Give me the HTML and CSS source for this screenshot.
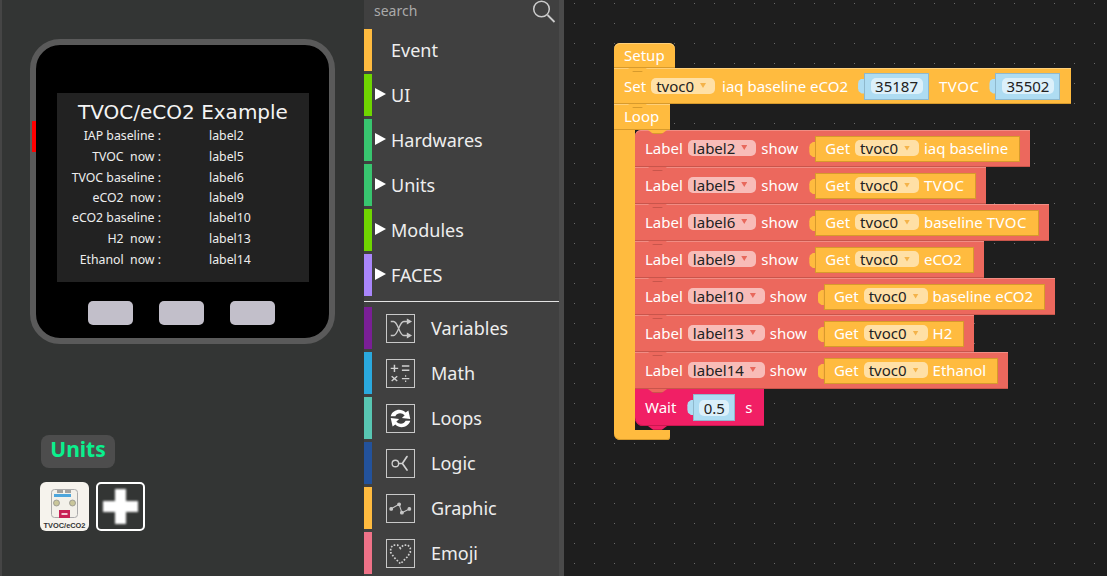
FILE: index.html
```html
<!DOCTYPE html>
<html lang="en">
<head>
    <meta charset="UTF-8">
    <meta name="viewport" content="width=device-width, initial-scale=1.0">
    <title>UIFlow TVOC/eCO2 Example</title>
    <link rel="stylesheet" href="styles.css">
</head>
<body>
    <section class="preview">
        <div class="device">
            <span class="power"></span>
            <div class="screen">
                <h1 class="screen-title">TVOC/eCO2 Example</h1>
                <div class="screen-rows">
                    <span class="key">IAP baseline :</span><span class="val">label2</span>
                    <span class="key">TVOC&nbsp; now :</span><span class="val">label5</span>
                    <span class="key">TVOC baseline :</span><span class="val">label6</span>
                    <span class="key">eCO2&nbsp; now :</span><span class="val">label9</span>
                    <span class="key">eCO2 baseline :</span><span class="val">label10</span>
                    <span class="key">H2&nbsp; now :</span><span class="val">label13</span>
                    <span class="key">Ethanol&nbsp; now :</span><span class="val">label14</span>
                </div>
            </div>
            <div class="device-btns">
                <span class="device-btn"></span>
                <span class="device-btn"></span>
                <span class="device-btn"></span>
            </div>
        </div>
        <div class="units-badge">Units</div>
        <div class="unit-tiles">
            <div class="unit-tile">
                <svg width="49" height="49" viewBox="0 0 49 49">
                    <rect x="11.500" y="7.500" width="26" height="28" rx="3" fill="#f3f1ea" stroke="#aaa"/>
                    <path d="M18 8v3M20 8v3M22 8v3M26 8v3M28 8v3M30 8v3" stroke="#555"/>
                    <rect x="14" y="12" width="17" height="3" fill="#4ea6dc"/>
                    <circle cx="16.500" cy="21" r="3" fill="#c9c69a" stroke="#888" stroke-width=".7"/>
                    <circle cx="32.500" cy="21" r="3" fill="#c9c69a" stroke="#888" stroke-width=".7"/>
                    <path d="M19 28h11v8h-11z" fill="#c81f55"/>
                    <path d="M21.500 31h6v2h-6z" fill="#f3c7d3"/>
                    <text class="tile-text" x="24.500" y="45.500" text-anchor="middle">TVOC/eCO2</text>
                </svg>
            </div>
            <div class="unit-add"><span class="plus"></span></div>
        </div>
    </section>

    <nav class="toolbox">
        <div class="search">
            <span class="search-text">search</span>
            <svg class="search-icon" width="24" height="24" viewBox="0 0 24 24" fill="none" stroke="#ccc">
                <circle cx="9.500" cy="9" r="7.800" stroke-width="1.500"/>
                <path d="M15.500 15l7 7" stroke-width="1.800"/>
            </svg>
        </div>
        <div class="cat"><span class="bar c-event"></span><span class="slot"></span>Event</div>
        <div class="cat"><span class="bar c-ui"></span><span class="slot"><i class="tri"></i></span>UI</div>
        <div class="cat"><span class="bar c-hw"></span><span class="slot"><i class="tri"></i></span>Hardwares</div>
        <div class="cat"><span class="bar c-hw"></span><span class="slot"><i class="tri"></i></span>Units</div>
        <div class="cat"><span class="bar c-ui"></span><span class="slot"><i class="tri"></i></span>Modules</div>
        <div class="cat"><span class="bar c-faces"></span><span class="slot"><i class="tri"></i></span>FACES</div>
        <hr class="divider">
        <div class="cat"><span class="bar c-var"></span>
            <svg class="cat-icon" viewBox="0 0 29 29" fill="none" stroke="#c8c8c8" stroke-width="1.400">
                <path d="M4 7h3c5 0 6 15 11 15h5M4 22h3c5 0 6-15 11-15h5"/>
                <path d="M22 5l3.500 2-3.500 2zM22 20l3.500 2-3.500 2z" fill="#c8c8c8"/>
            </svg>Variables</div>
        <div class="cat"><span class="bar c-math"></span>
            <svg class="cat-icon" viewBox="0 0 29 29" fill="none" stroke="#d0d0d0" stroke-width="1.600">
                <path d="M4 9h8M8 5v8M16 6.500h8M16 11h8M5 17.500l6 5M11 17.500l-6 5M16 20h8"/>
                <path d="M20 16.500v1.500M20 22v1.500" stroke-width="1.300"/>
            </svg>Math</div>
        <div class="cat"><span class="bar c-loops"></span>
            <svg class="cat-icon" viewBox="0 0 29 29" fill="#fff">
                <path d="M4 12c2-7 11-9 16-4l3-2 2 9-9-1 3-3c-3-3-8-3-10 1z"/>
                <path d="M25 17c-2 7-11 9-16 4l-3 2-2-9 9 1-3 3c3 3 8 3 10-1z"/>
            </svg>Loops</div>
        <div class="cat"><span class="bar c-logic"></span>
            <svg class="cat-icon" viewBox="0 0 29 29" fill="none" stroke="#d0d0d0" stroke-width="1.800">
                <circle cx="9" cy="14.500" r="3.500" stroke-width="1.400"/>
                <path d="M12.500 14.500h4l5-7.500M16.500 14.500l5 7" stroke-linecap="round"/>
            </svg>Logic</div>
        <div class="cat"><span class="bar c-event"></span>
            <svg class="cat-icon" viewBox="0 0 29 29" fill="#c8c8c8" stroke="#c8c8c8" stroke-width="1.100">
                <path d="M4 15l9-5 3 9 8-4" fill="none"/>
                <circle cx="4.500" cy="15" r="1.500"/>
                <circle cx="13" cy="10" r="1.500"/>
                <circle cx="16" cy="19" r="1.500"/>
                <circle cx="24" cy="15" r="1.500"/>
            </svg>Graphic</div>
        <div class="cat"><span class="bar c-emoji"></span>
            <svg class="cat-icon" viewBox="0 0 29 29" fill="none" stroke="#d0d0d0" stroke-width="1.800" stroke-dasharray="1.800 1.800">
                <path d="M14.500 9l-3-3.500h-5l-2.500 3v5l3.500 5 7 7 7-7 3.500-5v-5l-2.500-3h-5z"/>
            </svg>Emoji</div>
    </nav>
    <div class="toolbox-edge"></div>

    <main class="canvas">
        <div class="program">
            <div class="block yellow setup">Setup</div>
            <div class="block yellow set-row">
                Set <span class="field f-yellow">tvoc0<i class="caret"></i></span> <span class="set-text">iaq baseline eCO2</span>
                <span class="value"><span class="num">35187</span></span>
                <span class="caps">TVOC</span>
                <span class="value"><span class="num">35502</span></span>
            </div>
            <div class="loop">
                <div class="block yellow loop-head">Loop</div>
                <div class="loop-body">
                    <div class="loop-arm"></div>
                    <div class="loop-stack">
                        <div class="block red row">Label <span class="field f-red">label2<i class="caret"></i></span> show
                            <span class="getter">Get <span class="field f-yellow">tvoc0<i class="caret"></i></span> iaq baseline</span></div>
                        <div class="block red row">Label <span class="field f-red">label5<i class="caret"></i></span> show
                            <span class="getter">Get <span class="field f-yellow">tvoc0<i class="caret"></i></span> <span class="caps">TVOC</span></span></div>
                        <div class="block red row">Label <span class="field f-red">label6<i class="caret"></i></span> show
                            <span class="getter">Get <span class="field f-yellow">tvoc0<i class="caret"></i></span> baseline&nbsp;<span class="caps">TVOC</span></span></div>
                        <div class="block red row">Label <span class="field f-red">label9<i class="caret"></i></span> show
                            <span class="getter">Get <span class="field f-yellow">tvoc0<i class="caret"></i></span> eCO2</span></div>
                        <div class="block red row">Label <span class="field f-red">label10<i class="caret"></i></span> show
                            <span class="getter">Get <span class="field f-yellow">tvoc0<i class="caret"></i></span> baseline eCO2</span></div>
                        <div class="block red row">Label <span class="field f-red">label13<i class="caret"></i></span> show
                            <span class="getter">Get <span class="field f-yellow">tvoc0<i class="caret"></i></span> H2</span></div>
                        <div class="block red row">Label <span class="field f-red">label14<i class="caret"></i></span> show
                            <span class="getter">Get <span class="field f-yellow">tvoc0<i class="caret"></i></span> Ethanol</span></div>
                        <div class="block pink wait">Wait <span class="value"><span class="num">0.5</span></span> s</div>
                    </div>
                </div>
                <div class="loop-foot"></div>
            </div>
        </div>
    </main>
</body>
</html>
```

FILE: styles.css
```css
html, body { margin: 0; height: 100%; overflow: hidden; }
body { display: flex; width: 1107px; height: 576px; font-family: "Noto Sans", sans-serif; background: #1e1e1e; }

/* left preview */
.preview { width: 334px; border-left: 2px solid #454545; background: #333534; padding: 39px 0 0 28px; }
.device { position: relative; width: 305px; height: 305px; box-sizing: border-box; border: 6px solid #5a5a5a; border-radius: 30px; background: #000; padding: 48px 20px 0 21px; }
.power { position: absolute; left: -4px; top: 76px; width: 4px; height: 31px; background: #f00; }
.screen { width: 252px; height: 189px; background: #222; color: #eee; }
.screen-title { margin: 0; padding-top: 5px; height: 30px; text-align: center; font: 400 20px/28px "DejaVu Sans", sans-serif; color: #f4f4f4; }
.screen-rows { display: grid; grid-template-columns: 104px 1fr; column-gap: 48px; grid-template-rows: 21px 21px 20px 20px 21px 21px 20px; font-size: 12.300px; line-height: 20px; margin-top: -2px; }
.key { text-align: right; white-space: pre; }
.device-btns { display: flex; gap: 26px; margin: 19px 0 0 31px; }
.device-btn { width: 45px; height: 24px; border-radius: 5px; background: #c2bfca; }

.units-badge { width: 74px; height: 33px; margin: 91px 0 0 11px; border-radius: 8px; background: #4d4d4d; color: #0af08e; font-weight: 700; font-size: 21px; line-height: 29px; text-align: center; }
.unit-tiles { display: flex; gap: 7px; margin: 14px 0 0 10px; }
.unit-tile { width: 49px; height: 49px; border-radius: 6px; background: #f6f3ed; }
.tile-text { font: 700 7.400px "Liberation Sans", sans-serif; fill: #333; }
.unit-add { position: relative; width: 49px; height: 49px; box-sizing: border-box; border: 2px solid #fff; border-radius: 5px; }
.plus { position: absolute; left: 5px; top: 5px; width: 35px; height: 35px; filter: blur(.8px); background: linear-gradient(#fff, #fff) center / 35px 11px no-repeat, linear-gradient(#fff, #fff) center / 11px 35px no-repeat; border-radius: 4px; }

/* toolbox */
.toolbox { width: 195px; background: #404040; color: #eee; font-size: 18px; }
.toolbox-edge { width: 5px; background: #4a4a4a; }
.search { position: relative; height: 29px; }
.search-text { position: absolute; left: 10px; top: 1px; font-size: 14px; line-height: 20px; color: #aaa; }
.search-icon { position: absolute; right: 3px; top: 0; }
.cat { display: flex; align-items: center; height: 42px; margin-bottom: 3px; line-height: 42px; }
.bar { width: 8px; height: 42px; }
.slot { display: block; width: 19px; }
.tri { display: block; width: 11px; height: 12px; margin: 0 0 2px 3px; background: #fff; clip-path: polygon(0 0, 100% 50%, 0 100%); }
.cat-icon { width: 27px; height: 27px; border: 1px solid #c8c8c8; margin: 0 16px 0 14px; }
.divider { height: 1px; margin: 5px 0; border: 0; background: #e4e4e4; }
.c-event { background: #ffbb3f; }
.c-ui { background: #6fd600; }
.c-hw { background: #38c56f; }
.c-faces { background: #a986fb; }
.c-var { background: #7a1f96; }
.c-math { background: #2aa9de; }
.c-loops { background: #58c6b2; }
.c-logic { background: #23529b; }
.c-emoji { background: #ef7288; }

/* block canvas */
.canvas { flex: 1; position: relative; background-color: #1e1e1e; background-image: radial-gradient(circle at 10.500px 3.500px, #6a6a6a .6px, transparent 1px); background-size: 20px 20px; }
.program { position: absolute; left: 50px; top: 43px; color: #fff; font-size: 15px; }
.block { position: relative; display: flex; align-items: center; width: fit-content; box-sizing: border-box; white-space: nowrap; background: var(--fill); box-shadow: inset 0 1px 0 var(--light), inset 0 -1px 0 var(--edge); }
.block::after { content: ""; position: absolute; left: 14px; bottom: -4px; z-index: 1; width: 19px; height: 4px; background: linear-gradient(var(--fill) 3px, var(--edge) 3px); clip-path: polygon(0 0, 100% 0, 72% 100%, 28% 100%); }
.yellow { --fill: #ffbb3f; --light: #ffd07a; --edge: #d79a2c; }
.red { --fill: #ec685d; --light: #f18d84; --edge: #c8554b; }
.pink { --fill: #f11f65; --light: #f11f65; --edge: #c9184f; }
.caps { letter-spacing: .5px; }

.setup { height: 25px; padding: 0 10px 2px; border-radius: 6px 6px 0 0; }
.set-row { height: 36px; padding: 0 11px 1px 10px; }
.set-text { margin-left: 2px; }
.set-row .value { margin: 1px 10px 0 16px; }
.set-row .value:last-child { margin-right: 0; }
.loop-head { height: 26px; width: 56px; padding: 0 10px 2px; }
.loop-head::after { left: 34px; }
.loop-body { display: flex; }
.loop-arm { width: 21px; background: #ffbb3f; }
.loop-stack { display: flex; flex-direction: column; padding-bottom: 4px; }
.loop-foot { width: 56px; height: 10px; background: #ffbb3f; border-radius: 0 0 3px 6px; box-shadow: inset 0 -1px 0 #d79a2c; }

.row { height: 37px; padding: 0 10px 2px; }
.row:first-child { border-radius: 6px 0 0 0; }
.row::after { left: 13px; }
.wait { height: 37px; padding: 0 11px 2px 10px; border-radius: 0 0 0 8px; }
.wait .value { width: 42px; margin: 2px 10px 0 17px; }
.wait .num { min-width: 30px; }
.wait::after { left: 13px; }

.field { display: inline-flex; align-items: center; height: 16px; margin: 0 5px; padding: 0 9px 0 5px; border-radius: 5px; color: #222; line-height: 16px; }
.f-yellow { background: #ffe0a6; }
.f-red { background: #f8bcb8; }
.caret { display: block; width: 6px; height: 5px; margin-left: 6px; clip-path: polygon(0 0, 100% 0, 50% 100%); }
.f-yellow .caret { background: #f4b34a; }
.f-red .caret { background: #e8685c; }

.getter { position: relative; display: inline-flex; align-items: center; box-sizing: border-box; height: 26px; margin: 3px 0 0 17px; padding: 0 12px 2px 10px; background: #ffbb3f; box-shadow: inset 0 0 0 1px #d79a2c; }
.getter::before, .value::before { content: ""; position: absolute; left: -6px; top: 6px; width: 6px; height: 15px; background: inherit; clip-path: polygon(100% 0, 60% 0, 10% 15%, 0 35%, 0 65%, 10% 85%, 60% 100%, 100% 100%); }
.value { position: relative; display: inline-flex; align-items: center; justify-content: center; width: 65px; height: 27px; background: #aedcf2; box-shadow: inset 0 0 0 1px #8fb8cc; }
.num { display: block; min-width: 52px; text-align: center; height: 16px; line-height: 16px; border-radius: 5px; background: #dcf0fa; color: #222; }
```
